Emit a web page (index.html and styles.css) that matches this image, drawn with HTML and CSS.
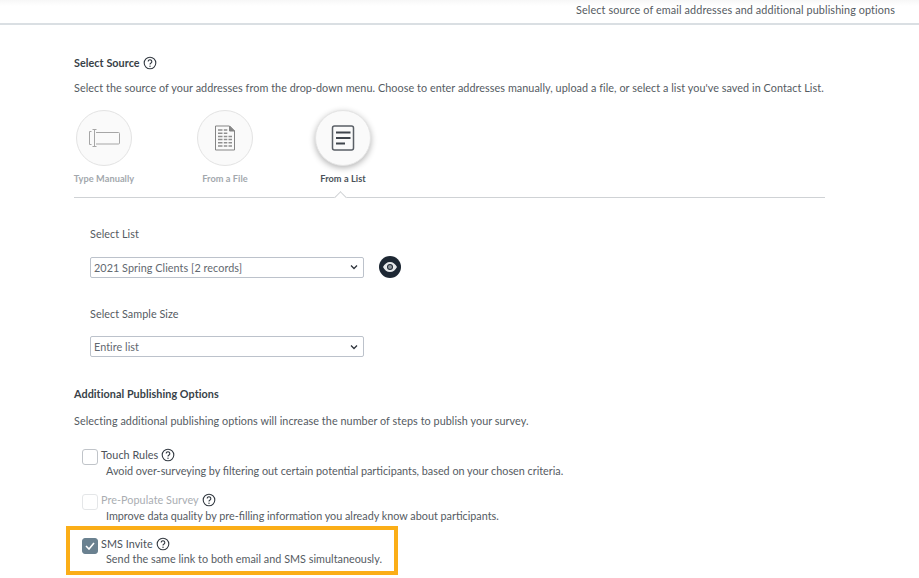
FILE: index.html
```html
<!DOCTYPE html>
<html lang="en">
<head>
<meta charset="utf-8">
<title>Select Source</title>
<link rel="stylesheet" href="styles.css">
</head>
<body>
<header class="topbar"><span>Select source of email addresses and additional publishing options</span></header>
<main class="content">
  <h2 class="heading first">Select Source
    <svg class="help" viewBox="0 0 14 14"><circle cx="7" cy="7" r="5.8"/><path d="M5.2 5.6a1.8 1.8 0 1 1 2.8 1.5c-.7.4-1 .8-1 1.5"/><circle class="dot" cx="7" cy="10.3" r=".7"/></svg>
  </h2>
  <p class="desc">Select the source of your addresses from the drop-down menu. Choose to enter addresses manually, upload a file, or select a list you've saved in Contact List.</p>
  <div class="sources">
    <div class="source">
      <div class="circle"><svg width="32" height="20" viewBox="0 0 32 20" class="ico"><path d="M3.500 3.500H1.500v13h2"/><path d="M4.500 1.500h4M6.500 1.500v17M4.500 18.500h4"/><path d="M8 4.500h22.500a1 1 0 0 1 1 1v9.500a1 1 0 0 1-1 1H8"/></svg></div>
      <span class="source-label">Type Manually</span>
    </div>
    <div class="source file">
      <div class="circle"><svg width="22" height="26" viewBox="0 0 22 26" class="ico ico-file"><path d="M1.500 1h14l5 5v19h-19z"/><path class="fold" d="M15.500 1v5h5z"/><path class="lines" d="M4 5h4.500M9.800 5h3.500M4 8.200h4.500M9.800 8.200h3.500M4 11.400h4.500M9.800 11.400h3.500M14.500 11.400h3.500M4 14.600h4.500M9.800 14.600h3.500M14.500 14.600h3.500M4 17.800h4.500M9.800 17.800h3.500M14.500 17.800h3.500M4 21h4.500M9.800 21h3.500M14.500 21h3.500"/></svg></div>
      <span class="source-label">From a File</span>
    </div>
    <div class="source active">
      <div class="circle"><svg width="24" height="26" viewBox="0 0 24 26" class="ico-list"><rect x="1.500" y="1" width="21" height="24" rx="2"/><path d="M5 7.500h14.500M5 13h14.500M5 18.500h9"/></svg></div>
      <span class="source-label">From a List</span>
    </div>
  </div>
  <div class="rule"><span class="caret"></span></div>
  <section class="fields">
    <label class="field-label">Select List</label>
    <div class="select-row">
      <div class="select">2021 Spring Clients [2 records]<svg class="chev" viewBox="0 0 8 6"><path d="M1 1.500l3 3 3-3"/></svg></div>
      <span class="eye"><svg width="14" height="10" viewBox="0 0 14 10"><path fill-rule="evenodd" d="M7 0c3 0 5.500 2 7 5-1.500 3-4 5-7 5S1.500 8 0 5c1.500-3 4-5 7-5zm0 2a3 3 0 1 0 0 6 3 3 0 0 0 0-6z"/><circle class="pupil" cx="7" cy="5" r="2"/></svg></span>
    </div>
    <label class="field-label second">Select Sample Size</label>
    <div class="select-row">
      <div class="select">Entire list<svg class="chev" viewBox="0 0 8 6"><path d="M1 1.500l3 3 3-3"/></svg></div>
    </div>
  </section>
  <h2 class="heading additional">Additional Publishing Options</h2>
  <p class="desc desc-wide">Selecting additional publishing options will increase the number of steps to publish your survey.</p>
  <div class="options">
    <div class="option">
      <span class="check"></span>
      <div class="option-title">Touch Rules <svg class="help" viewBox="0 0 14 14"><circle cx="7" cy="7" r="5.8"/><path d="M5.2 5.6a1.8 1.8 0 1 1 2.8 1.5c-.7.4-1 .8-1 1.500"/><circle class="dot" cx="7" cy="10.3" r=".7"/></svg></div>
      <div class="option-desc snug">Avoid over-surveying by filtering out certain potential participants, based on your chosen criteria.</div>
    </div>
    <div class="option disabled">
      <span class="check"></span>
      <div class="option-title"><span class="muted">Pre-Populate Survey</span> <svg class="help" viewBox="0 0 14 14"><circle cx="7" cy="7" r="5.8"/><path d="M5.2 5.6a1.8 1.8 0 1 1 2.8 1.5c-.7.4-1 .8-1 1.500"/><circle class="dot" cx="7" cy="10.3" r=".7"/></svg></div>
      <div class="option-desc snug">Improve data quality by pre-filling information you already know about participants.</div>
    </div>
    <div class="highlight">
      <div class="option">
        <span class="check checked"><svg width="10" height="8" viewBox="0 0 10 8"><path d="M1 4l3 3 5-6"/></svg></span>
        <div class="option-title">SMS Invite <svg class="help" viewBox="0 0 14 14"><circle cx="7" cy="7" r="5.8"/><path d="M5.2 5.6a1.8 1.8 0 1 1 2.8 1.5c-.7.4-1 .8-1 1.500"/><circle class="dot" cx="7" cy="10.3" r=".7"/></svg></div>
        <div class="option-desc tight">Send the same link to both email and SMS simultaneously.</div>
      </div>
    </div>
  </div>
</main>
</body>
</html>
```

FILE: styles.css
```css
* { box-sizing: border-box; }
html, body { margin: 0; height: 578px; overflow: hidden; background: #fff; }
body { font-family: Lato, "Liberation Sans", sans-serif; font-size: 10.8px; letter-spacing: .06px; color: #3e4652; }
.topbar { height: 25px; border-bottom: 2px solid #dadfe3; display: flex; justify-content: flex-end; padding: 3px 24px 0 0; color: #555b62; line-height: 14px; letter-spacing: .12px; background: linear-gradient(#f7f7f7, #fff 6px); }
.content { padding: 0 0 0 74px; }
.heading { margin: 0; font-size: 10.8px; font-weight: 700; color: #383f47; display: flex; align-items: center; gap: 3px; line-height: 14px; }
.heading.first { padding-top: 31px; }
.desc { margin: 11px 0 0; line-height: 14px; color: #555b62; white-space: nowrap; }
.desc-wide { margin-top: 13px; }
.help { width: 14px; height: 14px; fill: none; stroke: #333a42; stroke-width: 1.1; vertical-align: -3px; }
.help .dot { fill: #333a42; stroke: none; }
.sources { display: grid; grid-template-columns: 121px 118px 60px; margin-top: 15px; }
.source { width: 60px; display: flex; flex-direction: column; align-items: center; }
.circle { width: 56px; height: 56px; border-radius: 50%; border: 1px solid #e3e3e3; background: #fafafa; display: flex; align-items: center; justify-content: center; }
.source-label { margin-top: 6px; font-size: 9.200px; font-weight: 700; color: #a3a8ad; line-height: 14px; white-space: nowrap; }
.active .source-label { color: #4b5259; }
.active .circle { border-color: #e4e4e4; box-shadow: 0 2px 6px rgba(0,0,0,.3); }
.ico { fill: none; stroke: #a6a6a6; stroke-width: 1; }
.ico-file { stroke: #858585; }
.ico-file .fold { fill: #858585; }
.ico .lines { stroke-width: 1.500; stroke: #8f8f8f; }
.ico-list { fill: none; stroke: #5a5f66; stroke-width: 1.500; }
.ico-list path { stroke: #3f454c; stroke-width: 2; }
.rule { position: relative; width: 751px; height: 1px; margin-top: 11px; background: #cfd2d5; }
.caret { position: absolute; left: 262px; top: -4px; width: 9px; height: 9px; background: #fff; border-left: 1px solid #cfd2d5; border-top: 1px solid #cfd2d5; transform: rotate(45deg); }
.fields { padding: 29px 0 0 16px; }
.field-label { display: block; line-height: 14px; color: #555b62; }
.select-row { display: flex; align-items: center; gap: 15px; margin-top: 15px; }
.select { width: 274px; height: 21px; border: 1px solid #bcc2cb; border-radius: 2px; padding: 0 3px; display: flex; align-items: center; justify-content: space-between; color: #62686f; }
.chev { width: 8px; height: 6px; margin-right: 2px; fill: none; stroke: #2f353c; stroke-width: 1.300; }
.eye { width: 22px; height: 22px; border-radius: 50%; background: #1d2733; display: flex; align-items: center; justify-content: center; }
.eye svg { fill: #e6e8ea; }
.eye .pupil { fill: #8e949a; }
.second { margin-top: 29px; }
.heading.additional { margin-top: 30px; }
.options { margin-top: 20px; margin-left: 8px; display: flex; flex-direction: column; }
.option { position: relative; padding-left: 19px; height: 44.500px; }
.check { position: absolute; left: 0; top: 1px; width: 16px; height: 16px; border: 1px solid #c0c4c9; border-radius: 3px; background: #fff; display: flex; align-items: center; justify-content: center; }
.check.checked { background: #6a8190; border-color: #6a8190; }
.check.checked svg { fill: none; stroke: #fff; stroke-width: 1.600; }
.disabled .check { border-color: #e4e6e8; }
.option-title { line-height: 14px; color: #4b5259; display: flex; gap: 3px; align-items: center; }
.muted { color: #a9adb2; }
.option-desc { margin: 2px 0 0 5px; line-height: 14px; color: #555b62; white-space: nowrap; }
.option-desc.snug { letter-spacing: 0; }
.option-desc.tight { margin-top: 1px; letter-spacing: .03px; }
.highlight { width: 332px; height: 49px; margin: -11px 0 0 -16px; border: 4px solid #fbae17; padding: 7px 0 0 12px; }
```
